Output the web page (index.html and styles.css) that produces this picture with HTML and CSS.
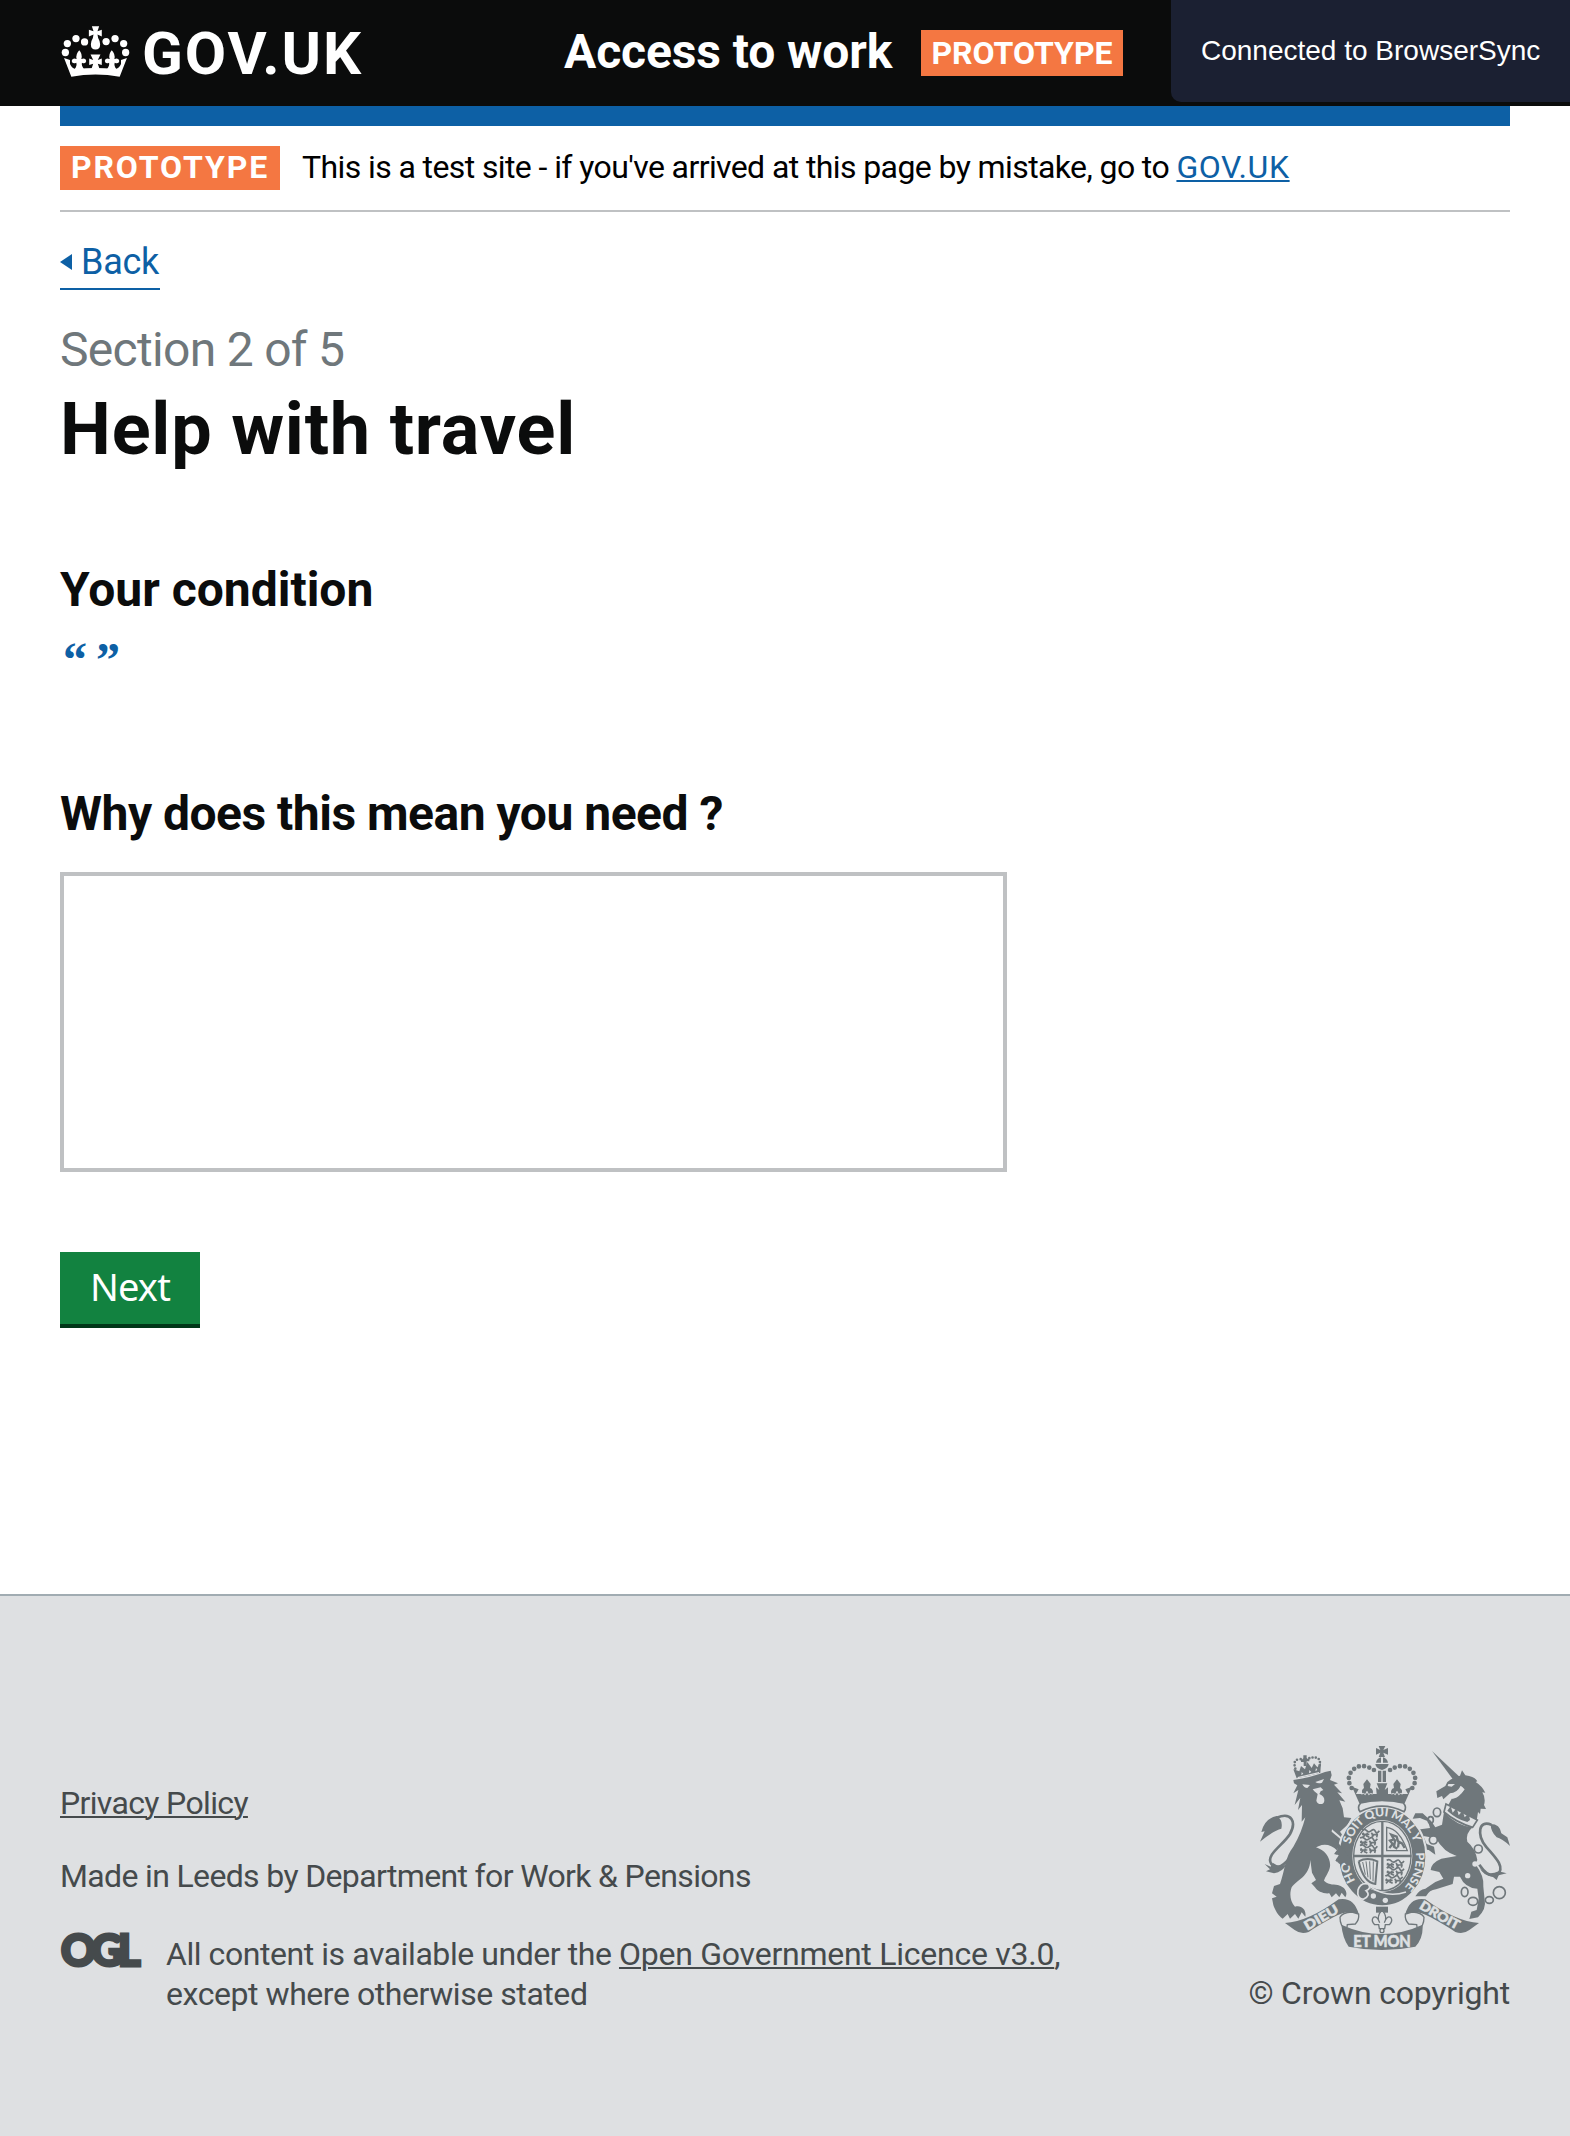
FILE: index.html
```
<!DOCTYPE html>
<html lang="en">
<head>
<meta charset="utf-8">
<title>Help with travel - Access to work</title>
<link rel="stylesheet" href="styles.css">
</head>
<body>
<div class="sync-notice">Connected to BrowserSync</div>

<header class="header">
  <a class="logo" href="#">
    <svg class="logo-crown" viewBox="62 77 206 154" aria-hidden="true">
      <g fill="#fff">
        <circle cx="80" cy="130" r="11"/><circle cx="106" cy="115" r="11"/><circle cx="132" cy="125" r="11"/><circle cx="74" cy="157" r="11"/>
        <circle cx="250" cy="130" r="11"/><circle cx="224" cy="115" r="11"/><circle cx="197" cy="124" r="11"/><circle cx="256" cy="157" r="11"/>
        <path d="M154 78h22l-5 15 13-5v21l-13-6 2 10q6 10 6 19 0 16-14 16t-14-16q0-9 6-19l2-10-14 6v-21l14 5z"/>
        <path d="M70 174L92 230Q165 217 238 230L260 174L242 180V192Q236 207 222 207Q165 200 108 207Q94 207 88 192V180Z"/>
        <path d="M150 163h30l-8 17 12-5v20l-12-4 5 15h-24l5-15-12 4v-20l12 5z"/>
        <path id="fleur-left" d="M116 150q11 12 6 27 14-6 15 6-2 10-13 5-2 8 6 19h-28q8-10 5-19-12 5-14-5 2-12 15-6-4-15 8-27z"/>
        <path d="M214 150q-11 12-6 27-14-6-15 6 2 10 13 5 2 8-6 19h28q-8-10-5-19 12 5 14-5-2-12-15-6 4-15-8-27z"/>
      </g>
    </svg>
    <span class="logo-text">GOV.UK</span>
  </a>
  <div class="service">
    <span class="service-name">Access to work</span>
    <span class="tag header-tag">PROTOTYPE</span>
  </div>
</header>

<main class="content">
  <div class="blue-bar"></div>
  <div class="phase-banner">
    <strong class="tag phase-tag">PROTOTYPE</strong>
    <span class="phase-text">This is a test site - if you've arrived at this page by mistake, go to <a href="#">GOV.UK</a></span>
  </div>
  <a class="back" href="#"><svg class="back-arrow" viewBox="0 0 12 16" aria-hidden="true"><path d="M0 8L12 0V16Z" fill="#0d60a5"/></svg>Back</a>
  <p class="section-count">Section 2 of 5</p>
  <h1 class="page-title">Help with travel</h1>
  <h2 class="question condition">Your condition</h2>
  <p class="quote">“”</p>
  <h2 class="question reason">Why does this mean you need ?</h2>
  <textarea class="answer" aria-label="Reason"></textarea>
  <button class="next" type="button">Next</button>
</main>

<footer class="footer">
  <div class="footer-meta">
    <a class="privacy" href="#">Privacy Policy</a>
    <p class="made">Made in Leeds by Department for Work &amp; Pensions</p>
    <div class="licence">
      <span class="ogl">OGL</span>
      <p class="licence-text"><span class="licence-line">All content is available under the <a href="#">Open Government Licence v3.0</a>,</span><br>except where otherwise stated</p>
    </div>
  </div>
  <div class="copyright">
    <svg class="crest" viewBox="90 48 750 612" aria-hidden="true">
      <defs>
        <path id="garter" d="M457 501A101 121 0 0 1 457 259A101 121 0 0 1 457 501"/>
        <path id="ribbon-left" d="M232 602Q285 572 338 540"/>
        <path id="ribbon-right" d="M566 534Q620 568 690 604"/>
        <g id="lions">
          <path d="M0 0q8-5 14 2t14 0 12 2 12-2M2 8l6 8-6 6M16 8l-2 10 8 4M28 8l6 8-4 6M42 6l4 8-2 8M0 13h22M28 14h20" fill="none" stroke="#6f777b" stroke-width="5"/>
        </g>
      </defs>
      <g fill="#6f777b">
        <!-- lion -->
        <path d="M192 160L190 150Q245 142 285 126L302 122L305 136L300 150L324 160L312 164L336 190L322 187L346 215L328 211L338 235L342 262L364 264L352 285L330 305L354 338L347 350L368 404L352 404L340 394L330 402L316 392L326 376L312 372L322 362Q300 340 275 345L258 352C285 360 303 385 300 410C298 425 285 440 282 452C300 468 312 460 330 467C347 473 354 490 346 502L335 488L328 502L318 490L305 502L298 490C280 492 262 484 255 472L244 460L258 450L246 428L241 390C239 440 200 450 185 472C178 490 180 515 195 530C215 524 230 540 226 560L215 547L205 566L195 552L180 566L173 552L158 566C145 558 135 540 130 525L126 505L140 500L126 490L132 468L150 462C165 420 165 380 190 350C208 320 218 292 226 262L215 275L216 225L204 240L211 203L194 225L205 180L190 190L202 166Z"/>
        <path d="M190 118L200 145Q235 138 271 128L273 98L262 112L252 100L245 114L232 96L225 118L213 108L208 124Z"/>
        <path d="M220 76h10v10h8v8h-8v14h-9v-12h-8v-8h7z"/>
        <path d="M90 335L104 304L94 306Q104 266 140 258Q160 270 154 296Q130 302 90 335Z"/>
        <path d="M104 402L122 410L128 398Q150 415 170 402Q158 426 132 430L108 424L120 418Z"/>
      </g>
      <path d="M140 263C185 245 200 275 180 312C160 345 105 375 124 402Q142 426 176 388" fill="none" stroke="#6f777b" stroke-width="8"/>
      <g fill="none" stroke="#6f777b" stroke-width="8" stroke-linecap="round" stroke-dasharray="0 10">
        <path d="M196 116Q188 90 206 88T224 92M228 88Q264 74 270 94L268 114"/>
      </g>
      <g fill="#dee0e2">
        <path d="M217 163l23 2-8 9q-10 0-15-11zM256 156l26-9-6 11q-12 4-20-2zM248 178l24-6 8 8-8 4-4 8q16 6 15 20-1 10-11 10t-13-10l4-20-10-8z"/>
        <path d="M203 141l64-15v4l-64 15zM215 126l5 5-6 5zM238 120l6 6-7 4zM258 114l4 6-6 4z"/>
        <path d="M262 352q25-12 34 2l-12-2 10 10q-18-10-32-10z"/>
        <path d="M306 298l40 34-3 5-38-32z"/>
      </g>

      <!-- unicorn -->
      <g fill="#6f777b">
        <path d="M606 63L690 142L668 147Z"/>
        <path d="M652 156Q672 140 690 137L696 121L706 136Q735 140 742 154L737 156Q756 168 766 188L757 187Q768 205 762 225L768 237L752 236L750 252L744 246L740 272Q700 262 655 225L665 206Q690 200 704 178L692 168Q680 190 660 190L640 208L636 198L622 204L619 184L646 168Z"/>
        <path d="M642 246Q680 288 728 292Q706 310 712 335Q736 355 742 390L736 402Q764 440 760 470L764 510Q770 536 744 562L718 567L724 545L740 540L746 506L742 476Q705 474 690 440L672 440L668 462L618 478Q598 480 588 499L556 499Q568 478 586 476L616 456L640 446L628 426L602 420Q604 398 634 386L680 378Q640 366 618 325L580 318L590 342L612 350L616 374L596 360L580 358L568 330L554 300L600 294L594 274L570 264L548 266L556 250L578 250L604 274L616 292L636 284Z"/>
        <path d="M782 282Q810 282 814 310L832 322L840 348Q815 325 800 322Q782 305 782 282Z"/>
        <path d="M748 412Q770 440 806 424L830 430L806 436L800 450L788 440Q760 438 748 412Z"/>
      </g>
      <path d="M784 284C745 268 740 315 768 350C800 385 828 415 800 436Q775 444 748 404" fill="none" stroke="#6f777b" stroke-width="8"/>
      <path d="M648 222L742 270L728 292Q680 278 642 246Z" fill="#dee0e2" stroke="#6f777b" stroke-width="5"/>
      <path d="M652 242l10-14 6 20 12-14 6 22 12-14 6 20 12-12 4 20-8 6Q680 268 652 242z" fill="#6f777b"/>
      <path d="M655 162l20 0-10 8-12-2zM692 168q16 8 2 22-12 16-32 18 26-14 30-40z" fill="#dee0e2"/>
      <g fill="#dee0e2"><circle cx="735" cy="402" r="8"/><circle cx="713" cy="437" r="8"/><circle cx="745" cy="357" r="11"/><circle cx="610" cy="330" r="11"/></g>
      <g fill="none" stroke="#6f777b" stroke-width="5">
        <ellipse cx="621" cy="247" rx="11" ry="13"/><ellipse cx="602" cy="270" rx="8" ry="10"/><circle cx="610" cy="330" r="12"/><circle cx="745" cy="357" r="12"/>
        <ellipse cx="704" cy="486" rx="10" ry="14"/><ellipse cx="729" cy="514" rx="14" ry="12"/><ellipse cx="778" cy="510" rx="12" ry="10"/><circle cx="808" cy="488" r="18"/>
      </g>

      <!-- garter and shield -->
      <ellipse cx="457" cy="380" rx="132" ry="149" fill="#6f777b" stroke="#dee0e2" stroke-width="6"/>
      <ellipse cx="457" cy="378" rx="90" ry="108" fill="#dee0e2"/>
      <ellipse cx="457" cy="378" rx="86" ry="104" fill="none" stroke="#6f777b" stroke-width="4"/>
      <path d="M457 276V480M370 378H544" stroke="#6f777b" stroke-width="7"/>
      <use href="#lions" x="396" y="300"/><use href="#lions" x="390" y="324"/><use href="#lions" x="390" y="347"/>
      <use href="#lions" x="470" y="391"/><use href="#lions" x="470" y="414"/><use href="#lions" x="466" y="438"/>
      <g fill="none" stroke="#6f777b">
        <path d="M470 292Q508 296 532 362H470Z" stroke-width="4"/>
        <path d="M478 354l10-12-8-10 12-4-8-14 16 6 4 14 12 6 8 14M496 328l-4 22 10 6M506 338l-2 14" stroke-width="7"/>
        <path d="M386 394Q412 380 442 394L436 462Q400 458 386 394" stroke-width="6"/>
        <path d="M398 396l8 38M408 394l6 48M419 394l2 54M430 394l-1 60" stroke-width="3"/>
      </g>
      <g fill="#dee0e2" font-family="Lato, sans-serif" font-weight="900" font-size="35">
        <text><textPath href="#garter" startOffset="212" textLength="268" lengthAdjust="spacingAndGlyphs">SOIT QUI MAL Y</textPath></text>
        <text><textPath href="#garter" startOffset="511" textLength="112" lengthAdjust="spacingAndGlyphs">PENSE</textPath></text>
        <text><textPath href="#garter" startOffset="98" textLength="62" lengthAdjust="spacingAndGlyphs">HO</textPath></text>
      </g>
      <path d="M318 330l38 48 12 26-16 4-12-14-12 8-10-12 8-14-12-6 10-14z" fill="#6f777b"/>
      <path d="M384 480Q392 456 414 462Q426 474 408 482Q424 496 400 508Q380 506 384 480Z" fill="#6f777b" stroke="#dee0e2" stroke-width="5"/>
      <path d="M420 470Q470 505 528 486" fill="none" stroke="#dee0e2" stroke-width="4"/>
      <circle cx="430" cy="498" r="8" fill="#dee0e2"/><circle cx="466" cy="511" r="8" fill="#dee0e2"/>

      <!-- royal crown -->
      <path d="M392 219Q456 204 520 219Q532 232 522 245Q456 212 390 245Q380 232 392 219Z" fill="#dee0e2" stroke="#6f777b" stroke-width="5"/>
      <g fill="#6f777b">
        <path d="M446 48h20l-6 12 14-6v20l-14-6 5 13h-19l5-13-13 6v-20l13 6z"/>
        <path d="M438 98Q440 86 453 82V98ZM459 82Q472 86 474 98H459ZM436 102H476Q474 116 456 120Q438 116 436 102Z"/>
        <path d="M444 122h10v34h-10zM458 122h10v34h-10z"/>
        <path d="M366 170L386 178L378 192H398Q392 180 402 174L400 162L411 148L422 162L420 174Q432 178 428 192H440L438 172L448 180L440 160H472L464 180L474 172V192H484Q480 178 492 174L490 162L501 148L512 162L510 174Q520 180 514 192H534L526 178L546 170L524 220Q456 206 388 220Z"/>
      </g>
      <path d="M394 192q8-4 12 2l5-10 5 10q4-6 12-2M484 192q8-4 12 2l5-10 5 10q4-6 12-2" fill="none" stroke="#dee0e2" stroke-width="3"/>
      <g fill="none" stroke="#6f777b" stroke-width="14" stroke-linecap="round" stroke-dasharray="0 16">
        <path d="M365 174C340 135 375 108 395 108Q415 108 438 124"/><path d="M547 174C572 135 537 108 517 108Q497 108 474 124"/>
      </g>

      <!-- motto ribbon -->
      <path d="M165 579Q235 575 326 508Q372 500 386 552L366 546Q340 545 310 562Q262 588 236 606Q212 614 194 600Z" fill="#6f777b"/>
      <path d="M330 562Q336 548 366 546L386 552Q388 570 376 582L352 584Q352 590 348 598Q330 590 330 562Z" fill="#dee0e2" stroke="#6f777b" stroke-width="4"/>
      <path d="M747 579Q677 575 586 508Q540 500 526 552L546 546Q572 545 602 562Q650 588 676 606Q700 614 718 600Z" fill="#6f777b"/>
      <path d="M582 562Q576 548 546 546L526 552Q524 570 536 582L560 584Q560 590 564 598Q582 590 582 562Z" fill="#dee0e2" stroke="#6f777b" stroke-width="4"/>
      <path d="M334 584Q456 640 578 584Q580 625 556 650Q456 670 356 650Q338 625 334 584Z" fill="#6f777b"/>
      <g fill="#dee0e2" stroke="#dee0e2" stroke-width="1.5" font-family="Lato, sans-serif" font-weight="900">
        <text font-size="39"><textPath href="#ribbon-left" textLength="112" lengthAdjust="spacingAndGlyphs">DIEU</textPath></text>
        <text font-size="39"><textPath href="#ribbon-right" textLength="132" lengthAdjust="spacingAndGlyphs">DROIT</textPath></text>
        <text x="370" y="651" font-size="48" textLength="172" lengthAdjust="spacingAndGlyphs">ET MON</text>
      </g>
      <path d="M438 530h36v18h-36z" fill="#6f777b"/>
      <path d="M456 540Q474 560 463 578Q470 556 482 562Q490 572 478 584H466L464 596H448L446 584H434Q422 572 430 562Q442 556 449 578Q438 560 456 540Z" fill="#dee0e2" stroke="#6f777b" stroke-width="4"/>
      <circle cx="456" cy="602" r="6" fill="#dee0e2" stroke="#6f777b" stroke-width="4"/>
    </svg>
    <span class="copyright-text">© Crown copyright</span>
  </div>
</footer>
</body>
</html>
```
FILE: styles.css
```
* { box-sizing: border-box; }

body {
  margin: 0;
  min-height: 2136px;
  display: flex;
  flex-direction: column;
  background: #fff;
  color: #0b0c0c;
  font-family: Roboto, "Liberation Sans", sans-serif;
  font-size: 32px;
  line-height: 40px;
}

p, h1, h2 { margin: 0; }

.sync-notice {
  position: absolute;
  top: 0;
  right: 0;
  width: 399px;
  height: 102px;
  padding-left: 30px;
  border-bottom-left-radius: 10px;
  background: #1b2032;
  color: #fff;
  font: 28px/101px "Liberation Sans", sans-serif;
  white-space: nowrap;
}

.header {
  display: flex;
  height: 106px;
  padding: 0 60px;
  background: #0b0c0c;
  color: #fff;
}

.logo {
  display: flex;
  width: 504px;
  color: #fff;
  text-decoration: none;
}

.logo-crown {
  width: 69px;
  height: 51px;
  margin: 26px 12px 0 1px;
}

.logo-text {
  font-size: 60px;
  font-weight: 700;
  line-height: 107px;
  letter-spacing: 1.9px;
}

.service {
  display: flex;
  align-items: flex-start;
}

.service-name {
  width: 357px;
  font-size: 48px;
  font-weight: 700;
  line-height: 103px;
  letter-spacing: -0.1px;
  white-space: nowrap;
}

.tag {
  background: #f47742;
  color: #fff;
  font-weight: 700;
  text-align: center;
}

.header-tag {
  width: 202px;
  margin-top: 30px;
  line-height: 46px;
}

.content {
  display: flex;
  flex-direction: column;
  align-items: flex-start;
  padding: 0 60px;
}

.blue-bar {
  align-self: stretch;
  height: 20px;
  background: #0d60a5;
}

.phase-banner {
  display: flex;
  align-self: stretch;
  height: 86px;
  padding-top: 20px;
  border-bottom: 2px solid #bfc1c3;
  color: #000;
  line-height: 42px;
}

.phase-tag {
  width: 220px;
  height: 44px;
  margin-right: 22px;
  letter-spacing: 1.9px;
}

.phase-text { letter-spacing: -0.6px; white-space: nowrap; }

.phase-text a {
  color: #0d60a5;
  letter-spacing: 0.6px;
  text-underline-offset: 2px;
  text-decoration-thickness: 2px;
}

.back {
  display: flex;
  align-items: center;
  margin-top: 30px;
  width: 100px;
  padding-bottom: 6px;
  border-bottom: 2px solid #0d60a5;
  color: #0d60a5;
  font-size: 36px;
  letter-spacing: -0.3px;
  text-decoration: none;
}

.back-arrow { width: 12px; height: 16px; margin-right: 9px; }

.section-count {
  margin-top: 30px;
  color: #6f777b;
  font-size: 48px;
  line-height: 60px;
  letter-spacing: -0.7px;
}

.page-title {
  margin-top: 10px;
  font-size: 72px;
  line-height: 80px;
  letter-spacing: 0.8px;
}

.question {
  font-size: 48px;
  line-height: 60px;
}

.condition { margin-top: 90px; }

.quote {
  margin: 10px 0 0 3px;
  color: #0d60a5;
  font: bold 48px/60px "Liberation Serif", serif;
  letter-spacing: 9px;
}

.reason { margin-top: 94px; letter-spacing: -0.5px; }

.answer {
  display: block;
  width: 947px;
  height: 300px;
  margin-top: 28px;
  border: 4px solid #bfc1c3;
  background: #fff;
  resize: none;
}

.next {
  width: 140px;
  height: 72px;
  margin-top: 80px;
  padding: 0 0 4px;
  border: 0;
  background: #128240;
  box-shadow: 0 4px 0 #003618;
  color: #fff;
  font: 38px/67px "Noto Sans", sans-serif;
  letter-spacing: -0.8px;
}

.footer {
  display: flex;
  justify-content: space-between;
  align-items: flex-start;
  height: 542px;
  margin-top: auto;
  padding: 150px 60px 0;
  border-top: 2px solid #a1acb2;
  background: #dee0e2;
  color: #454a4c;
  letter-spacing: -0.44px;
}

.footer a { color: #454a4c; text-underline-offset: 2px; text-decoration-thickness: 2px; }

.footer-meta { padding-top: 37px; white-space: nowrap; }

.privacy { display: block; letter-spacing: -0.65px; }

.made { margin-top: 33px; letter-spacing: -0.65px; }

.licence { display: flex; margin-top: 38px; }

.ogl {
  width: 105px;
  margin-left: 1px;
  font: 900 43px/31px Lato, sans-serif;
  letter-spacing: -4.5px;
  -webkit-text-stroke: 3px #454a4c;
}

.licence-line a { letter-spacing: -0.25px; }

.copyright {
  display: flex;
  flex-direction: column;
  align-items: flex-end;
}

.crest { width: 250px; height: 204px; }

.copyright-text { margin-top: 23px; letter-spacing: -0.2px; }
```
